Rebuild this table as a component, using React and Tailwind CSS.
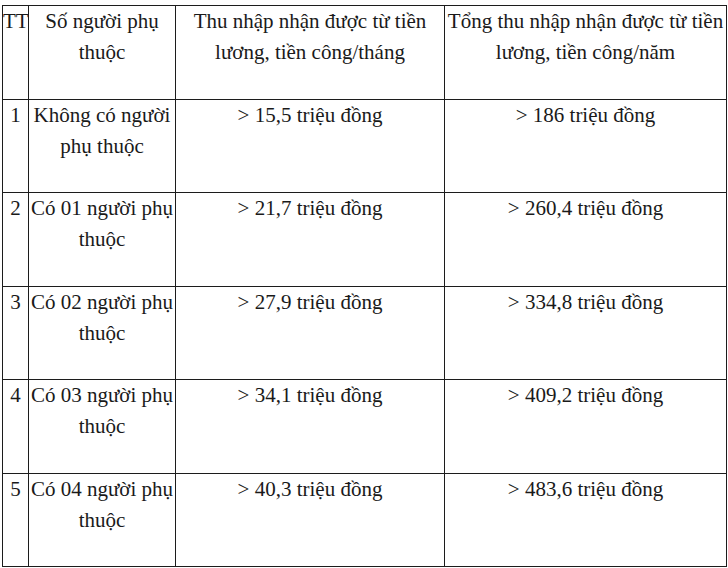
import React from "react";

const rows = [
  ["1", ["Không có người", "phụ thuộc"], "> 15,5 triệu đồng", "> 186 triệu đồng"],
  ["2", ["Có 01 người phụ", "thuộc"], "> 21,7 triệu đồng", "> 260,4 triệu đồng"],
  ["3", ["Có 02 người phụ", "thuộc"], "> 27,9 triệu đồng", "> 334,8 triệu đồng"],
  ["4", ["Có 03 người phụ", "thuộc"], "> 34,1 triệu đồng", "> 409,2 triệu đồng"],
  ["5", ["Có 04 người phụ", "thuộc"], "> 40,3 triệu đồng", "> 483,6 triệu đồng"],
];

const heights = ["h-[93px]", "h-[94px]", "h-[93px]", "h-[94px]", "h-[93px]"];

function Lines({ lines }) {
  return lines.map((l, i) => (
    <React.Fragment key={i}>
      {i > 0 && <br />}
      {l}
    </React.Fragment>
  ));
}

export default function App() {
  const cell = "border border-[#1c1c1c] align-top text-center p-0 whitespace-nowrap";
  return (
    <div className="w-[728px] h-[568px] bg-white pt-[5px] pl-[2px] overflow-hidden">
      <table
        className="table-fixed border-collapse w-[724px] text-[21px] leading-[31px] text-[#1a1a1a]"
        style={{ fontFamily: '"Liberation Serif", "Times New Roman", serif' }}
      >
        <colgroup>
          <col className="w-[26px]" />
          <col className="w-[147px]" />
          <col className="w-[269px]" />
          <col className="w-[282px]" />
        </colgroup>
        <tbody>
          <tr className="h-[94px]">
            <td className={cell}>TT</td>
            <td className={cell}>
              <Lines lines={["Số người phụ", "thuộc"]} />
            </td>
            <td className={cell}>
              <Lines lines={["Thu nhập nhận được từ tiền", "lương, tiền công/tháng"]} />
            </td>
            <td className={cell}>
              <Lines lines={["Tổng thu nhập nhận được từ tiền", "lương, tiền công/năm"]} />
            </td>
          </tr>
          {rows.map((r, i) => (
            <tr key={i} className={heights[i]}>
              <td className={cell}>{r[0]}</td>
              <td className={cell}>
                <Lines lines={r[1]} />
              </td>
              <td className={cell}>{r[2]}</td>
              <td className={cell}>{r[3]}</td>
            </tr>
          ))}
        </tbody>
      </table>
    </div>
  );
}
